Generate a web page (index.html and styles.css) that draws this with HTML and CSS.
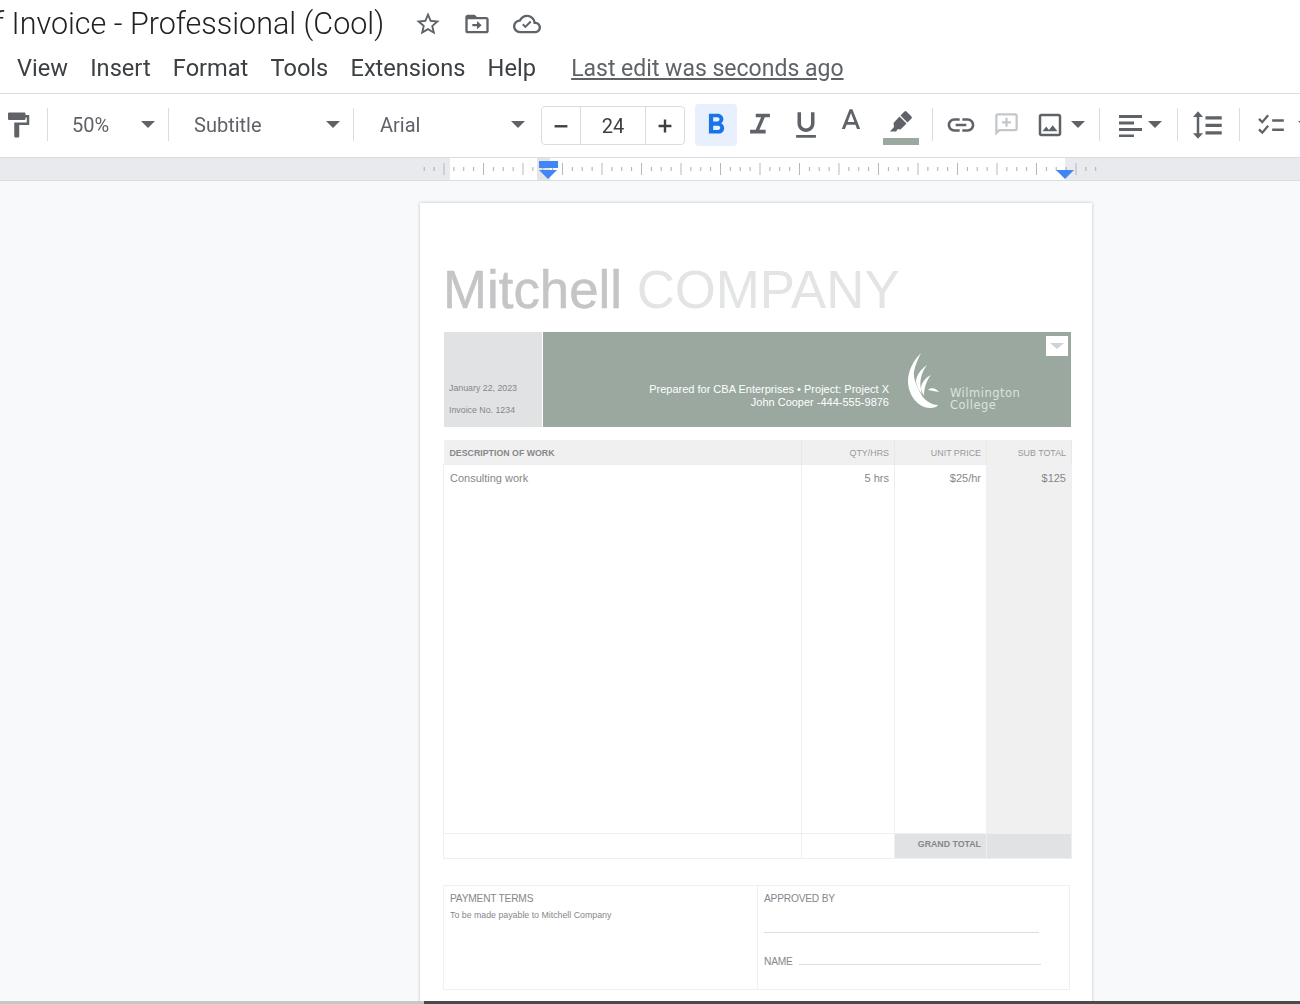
FILE: index.html
```html
<!DOCTYPE html>
<html lang="en">
<head>
  <meta charset="UTF-8" />
  <title>Invoice - Professional (Cool)</title>
  <link rel="stylesheet" href="styles.css">
</head>
<body>
  <header class="title-row">
    <h1 class="doc-title">f Invoice - Professional (Cool)</h1>
    <svg class="title-icon star" viewBox="0 0 24 24"><path d="M22 9.24l-7.19-.62L12 2 9.19 8.63 2 9.24l5.46 4.73L5.82 21 12 17.27 18.18 21l-1.63-7.03L22 9.24zM12 15.4l-3.76 2.27 1-4.28-3.32-2.88 4.38-.38L12 6.1l1.71 4.04 4.38.38-3.32 2.88 1 4.28L12 15.4z"/></svg>
    <svg class="title-icon move" viewBox="0 0 24 24"><path d="M20 6h-8l-2-2H4c-1.1 0-2 .9-2 2v12c0 1.1.9 2 2 2h16c1.1 0 2-.9 2-2V8c0-1.1-.9-2-2-2zm0 12H4V8h16v10zm-8-1.5l4-3.5-4-3.5V12H8v2h4v2.5z"/></svg>
    <svg class="title-icon cloud" viewBox="0 0 24 24"><path d="M19.35 10.04C18.67 6.59 15.64 4 12 4 9.11 4 6.6 5.64 5.35 8.04 2.34 8.36 0 10.91 0 14c0 3.31 2.69 6 6 6h13c2.76 0 5-2.24 5-5 0-2.64-2.05-4.78-4.65-4.96zM19 18H6c-2.21 0-4-1.79-4-4 0-2.05 1.53-3.76 3.56-3.97l1.07-.11.5-.95C8.08 7.14 9.94 6 12 6c2.62 0 4.88 1.86 5.39 4.43l.3 1.5 1.53.11c1.56.1 2.78 1.41 2.78 2.96 0 1.65-1.35 3-3 3z"/><path d="M10.6 15.6l-2.8-2.8 1.2-1.2 1.6 1.6 4-4 1.2 1.2z"/></svg>
  </header>

  <nav class="menu-row">
    <span>View</span>
    <span>Insert</span>
    <span>Format</span>
    <span>Tools</span>
    <span>Extensions</span>
    <span>Help</span>
    <a class="last-edit">Last edit was seconds ago</a>
  </nav>

  <div class="toolbar">
    <div class="tool paint"><svg viewBox="0 0 24 24"><path d="M18 4V3c0-.55-.45-1-1-1H5c-.55 0-1 .45-1 1v4c0 .55.45 1 1 1h12c.55 0 1-.45 1-1V6h1v4H9v11c0 .55.45 1 1 1h2c.55 0 1-.45 1-1v-9h8V4h-3z"/></svg></div>
    <div class="sep sep-paint"></div>
    <div class="select select-zoom"><span>50%</span><i class="caret"></i></div>
    <div class="sep"></div>
    <div class="select select-style"><span>Subtitle</span><i class="caret"></i></div>
    <div class="sep"></div>
    <div class="select select-font"><span>Arial</span><i class="caret"></i></div>
    <div class="stepper">
      <div class="step"><svg viewBox="0 0 24 24"><path d="M5 11h14v2.6H5z"/></svg></div>
      <div class="step-value">24</div>
      <div class="step"><svg viewBox="0 0 24 24"><path d="M19 13.3h-5.7V19h-2.6v-5.7H5v-2.6h5.7V5h2.6v5.7H19z"/></svg></div>
    </div>
    <div class="fmt fmt-bold"><svg viewBox="0 0 24 24"><path d="M15.6 10.79c.97-.67 1.65-1.77 1.65-2.79 0-2.26-1.75-4-4-4H7v14h7.04c2.09 0 3.71-1.7 3.71-3.79 0-1.52-.86-2.82-2.15-3.42zM10 6.5h3c.83 0 1.5.67 1.5 1.5s-.67 1.5-1.5 1.5h-3v-3zm3.500 9H10v-3h3.500c.83 0 1.500.67 1.500 1.500s-.67 1.500-1.500 1.500z"/></svg></div>
    <div class="fmt fmt-italic"><svg viewBox="0 0 24 24"><path d="M9 4h10v2.600h-3.600l-3.800 8.800H16V18H5v-2.600h4l3.800-8.800H9z"/></svg></div>
    <div class="fmt fmt-under"><svg viewBox="0 0 24 24"><path d="M12 17c3.310 0 6-2.690 6-6V3h-2.500v8c0 1.930-1.570 3.500-3.500 3.500S8.500 12.930 8.500 11V3H6v8c0 3.310 2.690 6 6 6zm-7 2v2h14v-2H5z"/></svg></div>
    <div class="fmt fmt-color"><svg viewBox="0 0 24 24"><path d="M11 3L5.500 17h2.250l1.120-3h6.250l1.120 3h2.250L13 3h-2zm-1.380 9L12 5.670 14.380 12H9.620z"/></svg></div>
    <div class="highlight">
      <svg viewBox="0 0 24 24"><path d="M15.500 1.500a1.500 1.500 0 0 1 2 0l5 5a1.500 1.500 0 0 1 0 2l-4 4-7-7zM10.500 6.500l7 7-6 6-2.500-.5-2 2.500H1l4-4.500-.5-4z"/></svg>
      <div class="highlight-bar"></div>
    </div>
    <div class="sep sep-link"></div>
    <div class="tool link"><svg viewBox="0 0 24 24"><path d="M3.900 12c0-1.710 1.390-3.100 3.100-3.100h4V7H7c-2.760 0-5 2.240-5 5s2.240 5 5 5h4v-1.900H7c-1.710 0-3.100-1.390-3.100-3.100zM8 13h8v-2H8v2zm9-6h-4v1.900h4c1.710 0 3.100 1.390 3.100 3.100s-1.390 3.100-3.100 3.100h-4V17h4c2.760 0 5-2.240 5-5s-2.240-5-5-5z"/></svg></div>
    <div class="tool comment"><svg viewBox="0 0 24 24"><path d="M20 2H4c-1.100 0-2 .9-2 2v18l4-4h14c1.100 0 2-.9 2-2V4c0-1.100-.9-2-2-2zm0 14H5.200L4 17.200V4h16v12zM11 14h2v-3h3V9h-3V6h-2v3H8v2h3z"/></svg></div>
    <div class="tool image"><svg viewBox="0 0 24 24"><path d="M19 3H5c-1.100 0-2 .9-2 2v14c0 1.100.9 2 2 2h14c1.100 0 2-.9 2-2V5c0-1.100-.9-2-2-2zm0 16H5V5h14v14zm-4.860-6.860l-3 3.870L9 13.140 6 17h12l-3.860-4.860z"/></svg></div>
    <i class="caret caret-image"></i>
    <div class="sep sep-align"></div>
    <div class="tool align"><svg viewBox="0 0 24 24"><path d="M1 2h24v3H1zM1 8.500h15v3H1zM1 15h24v3H1zM1 21.500h15v2.500H1z"/></svg></div>
    <i class="caret caret-align"></i>
    <div class="sep sep-spacing"></div>
    <div class="tool spacing"><svg viewBox="0 0 24 24"><path d="M10 5h13v2.600H10zM10 11h13v2.600H10zM10 17h13v2.600H10zM5 5.500H8L4 1 0 5.500h3v13H0L4 23l4-4.500H5z"/></svg></div>
    <div class="sep sep-check"></div>
    <div class="tool checklist"><svg viewBox="0 0 24 24"><path d="M13 7h10v2.200H13zM13 15h10v2.200H13zM8.800 3l1.500 1.300L4.600 11 1 7.500l1.400-1.400 2.100 2.100zM8.800 12l1.500 1.300L4.600 20 1 16.500l1.400-1.400 2.100 2.100z"/></svg></div>
    <i class="caret caret-more"></i>
  </div>

  <div class="ruler">
    <div class="ruler-paper"></div>
    <div class="ruler-shade"></div>
    <svg class="ruler-ticks" width="680" height="22">
      <defs>
        <pattern id="ticks" x="61" y="0" width="39.5" height="22" patternUnits="userSpaceOnUse">
          <rect x="0" y="5" width="1" height="12" fill="#b4b7bb"/>
          <rect x="9.900" y="9" width="1" height="4" fill="#a8abaf"/>
          <rect x="19.700" y="9" width="1" height="4" fill="#a8abaf"/>
          <rect x="29.600" y="9" width="1" height="4" fill="#a8abaf"/>
        </pattern>
      </defs>
      <rect width="680" height="22" fill="url(#ticks)"/>
    </svg>
    <div class="indent-bar"></div>
    <div class="indent-left"></div>
    <div class="indent-right"></div>
  </div>

  <main class="canvas">
    <section class="page">
      <div class="company"><span class="company-name">Mitchell</span> <span class="company-rest">COMPANY</span></div>

      <div class="banner">
        <div class="banner-meta">
          <p>January 22, 2023</p>
          <p>Invoice No. 1234</p>
        </div>
        <div class="banner-main">
          <div class="prepared">
            <p>Prepared for CBA Enterprises • Project: Project X</p>
            <p>John Cooper -444-555-9876</p>
          </div>
          <svg class="logo" viewBox="0 0 34 60">
            <path d="M14 1C7 8 1 18 1 29c0 15 11 27 22 27 4 0 7-1 8-3-7 0-14-5-17-11C10 35 6 26 7 20 8 13 11 7 14 1Z"/>
            <path d="M20 13C13 18 9 24 9 30c1 5 3 9 6 12-2-8-2-12-1-16 1-5 3-9 6-13Z"/>
            <path d="M24 23C18 26 14 31 14 37c1 3 2 5 3 7 0-7 2-15 7-21Z"/>
            <path d="M21 38c3-3 8-2 11 2-4-1-7-1-11-2Z"/>
          </svg>
          <div class="college">Wilmington<br>College</div>
          <div class="banner-menu"><i></i></div>
        </div>
      </div>

      <table class="items">
        <colgroup>
          <col class="col-desc"><col class="col-qty"><col class="col-price"><col class="col-sub">
        </colgroup>
        <thead>
          <tr>
            <th class="left desc-head">DESCRIPTION OF WORK</th>
            <th>QTY/HRS</th>
            <th>UNIT PRICE</th>
            <th>SUB TOTAL</th>
          </tr>
        </thead>
        <tbody>
          <tr class="item-row">
            <td class="left">Consulting work</td>
            <td>5 hrs</td>
            <td>$25/hr</td>
            <td class="sub-cell">$125</td>
          </tr>
          <tr class="total-row">
            <td></td>
            <td></td>
            <td class="grand">GRAND TOTAL</td>
            <td class="grand"></td>
          </tr>
        </tbody>
      </table>

      <div class="terms">
        <div class="terms-left">
          <h3>PAYMENT TERMS</h3>
          <p>To be made payable to Mitchell Company</p>
        </div>
        <div class="terms-right">
          <h3>APPROVED BY</h3>
          <div class="sign-line"></div>
          <div class="name-row"><h3>NAME</h3><div class="name-line"></div></div>
        </div>
      </div>
    </section>
  </main>

  <div class="bottom-edge"></div>
</body>
</html>
```

FILE: styles.css
```css
html,
body {
  margin: 0;
  height: 1004px;
  overflow: hidden;
}

body {
  display: flex;
  flex-direction: column;
  background-color: #fff;
  font-family: Roboto, "Liberation Sans", sans-serif;
  color: #3c4043;
  filter: blur(0.4px);
}

p,
h1,
h3 {
  margin: 0;
  font-weight: 400;
}

/* top rows */
.title-row {
  display: flex;
  align-items: center;
  height: 47px;
  white-space: nowrap;
}

.doc-title {
  margin-left: -6px;
  font-size: 30.5px;
  font-weight: 300;
  color: #202124;
}

.title-icon {
  width: 28px;
  height: 28px;
  fill: #5f6368;
}

.star {
  margin-left: 30px;
}

.move {
  margin-left: 21px;
}

.cloud {
  margin-left: 22px;
}

.menu-row {
  display: flex;
  align-items: center;
  gap: 22.2px;
  height: 47px;
  padding: 0 0 4px 17px;
  box-sizing: border-box;
  border-bottom: 1px solid #dadce0;
  font-size: 23.6px;
}

.last-edit {
  margin-left: 13px;
  font-size: 23px;
  color: #5f6368;
  text-decoration: underline;
}

/* toolbar */
.toolbar {
  display: flex;
  align-items: center;
  height: 63px;
  padding-bottom: 2px;
  box-sizing: border-box;
  font-size: 20px;
  color: #5f6368;
  white-space: nowrap;
}

.tool {
  display: flex;
  align-items: center;
  justify-content: center;
  flex: none;
}

.tool svg {
  width: 24px;
  height: 24px;
  fill: #5f6368;
}

.paint {
  width: 36px;
}

.paint svg {
  width: 30px;
  height: 30px;
}

.sep {
  flex: none;
  width: 1px;
  height: 33px;
  background-color: #dadce0;
}

.sep-paint {
  margin-left: 11px;
}

.select {
  display: flex;
  align-items: center;
  justify-content: space-between;
  flex: none;
  box-sizing: border-box;
}

.select-zoom {
  width: 120px;
  padding: 0 13px 0 24px;
}

.select-style {
  width: 184px;
  padding: 0 13px 0 25px;
}

.select-font {
  width: 187px;
  padding: 0 16px 0 26px;
}

.caret {
  display: block;
  flex: none;
  width: 0;
  height: 0;
  border-left: 7px solid transparent;
  border-right: 7px solid transparent;
  border-top: 7px solid #5f6368;
}

.stepper {
  display: flex;
  flex: none;
  width: 144px;
  height: 39px;
  margin-top: 2px;
  box-sizing: border-box;
  border: 1px solid #dadce0;
  border-radius: 4px;
}

.step {
  display: flex;
  align-items: center;
  justify-content: center;
  width: 38px;
}

.step svg {
  width: 22px;
  height: 22px;
  fill: #3c4043;
}

.step-value {
  width: 64px;
  border-left: 1px solid #dadce0;
  border-right: 1px solid #dadce0;
  text-align: center;
  line-height: 39px;
  color: #3c4043;
}

.fmt {
  display: flex;
  align-items: center;
  justify-content: center;
  flex: none;
  height: 42px;
}

.fmt svg {
  width: 34px;
  height: 34px;
  fill: #5f6368;
}

.fmt-bold {
  width: 42px;
  margin-left: 10px;
  border-radius: 4px;
  background-color: #e8f0fe;
}

.fmt-bold svg {
  fill: #1a73e8;
}

.fmt-italic {
  width: 46px;
}

.fmt-under {
  width: 45px;
}

.fmt-color {
  width: 46px;
  margin-top: -6px;
}

.highlight {
  flex: none;
  width: 36px;
  margin: 6px 0 0 9px;
}

.highlight svg {
  display: block;
  width: 24px;
  height: 24px;
  margin: 0 auto 4px;
  fill: #5f6368;
}

.highlight-bar {
  height: 7px;
  background-color: #9aa89f;
}

.sep-link {
  margin-left: 13px;
}

.link {
  width: 56px;
}

.link svg {
  width: 32px;
  height: 32px;
}

.comment {
  width: 34px;
}

.comment svg {
  width: 27px;
  height: 27px;
  fill: #c4c7c9;
}

.image {
  width: 48px;
  margin-left: 3px;
}

.image svg {
  width: 30px;
  height: 30px;
}

.caret-image {
  margin-left: -3px;
}

.sep-align {
  margin-left: 14px;
}

.align {
  width: 24px;
  margin-left: 18px;
}

.caret-align {
  margin-left: 6px;
}

.sep-spacing {
  margin-left: 15px;
}

.spacing {
  width: 30px;
  margin-left: 15px;
}

.spacing svg {
  width: 30px;
  height: 30px;
}

.sep-check {
  margin-left: 16px;
}

.checklist {
  width: 28px;
  margin-left: 17px;
}

.checklist svg {
  width: 28px;
  height: 28px;
}

.caret-more {
  margin-left: 13px;
}

/* ruler */
.ruler {
  position: relative;
  flex: none;
  height: 22px;
  border-top: 1px solid #dadce0;
  border-bottom: 1px solid #dadce0;
  background-color: #e8eaed;
}

.ruler-paper {
  width: 615px;
  height: 22px;
  margin-left: 450px;
  background-color: #fff;
}

.ruler-shade {
  position: absolute;
  top: 0;
  left: 537px;
  width: 13px;
  height: 22px;
  background-color: #e3e4e6;
}

.ruler-ticks {
  position: absolute;
  top: 0;
  left: 422px;
}

.indent-bar {
  position: absolute;
  top: 3px;
  left: 539px;
  width: 19px;
  height: 7px;
  background-color: #4285f4;
}

.indent-left,
.indent-right {
  position: absolute;
  top: 12px;
  width: 0;
  height: 0;
  border-left: 9px solid transparent;
  border-right: 9px solid transparent;
  border-top: 9px solid #4285f4;
}

.indent-left {
  left: 539px;
}

.indent-right {
  left: 1056px;
}

/* document */
.canvas {
  flex: 1;
  min-height: 0;
  padding: 22px 0 0 420px;
  background-color: #f8f9fa;
}

.page {
  box-sizing: border-box;
  width: 672px;
  height: 800px;
  padding: 0 21px 0 24px;
  background-color: #fff;
  box-shadow: 0 0 3px rgba(60, 64, 67, 0.3);
  font-family: "Liberation Sans", Arial, sans-serif;
  color: #85878a;
}

.company {
  margin-left: -1px;
  padding-top: 57px;
  height: 72px;
  font-size: 52.8px;
  line-height: 59px;
  white-space: nowrap;
}

.company-name {
  color: #c4c5c7;
  -webkit-text-stroke: 0.5px #c4c5c7;
}

.company-rest {
  color: #e3e4e6;
}

.banner {
  display: flex;
  height: 95px;
}

.banner-meta {
  display: flex;
  flex-direction: column;
  justify-content: flex-end;
  gap: 12px;
  box-sizing: border-box;
  width: 98px;
  padding: 0 0 12px 5px;
  background-color: #e1e2e4;
  font-size: 8.8px;
  color: #85878a;
}

.banner-main {
  position: relative;
  display: flex;
  align-items: flex-end;
  flex: 1;
  margin-left: 1px;
  background-color: #9aa89f;
}

.prepared {
  width: 346px;
  padding-bottom: 18px;
  text-align: right;
  font-size: 11px;
  line-height: 13px;
  color: #fff;
}

.logo {
  width: 34px;
  height: 60px;
  margin: 0 0 15px 18px;
  fill: #fff;
}

.college {
  margin: 0 0 16px 9px;
  font-family: "DejaVu Sans", sans-serif;
  font-size: 11.5px;
  line-height: 12px;
  letter-spacing: 0.5px;
  color: #dde2de;
}

.banner-menu {
  position: absolute;
  top: 4px;
  right: 3px;
  display: flex;
  align-items: center;
  justify-content: center;
  width: 22px;
  height: 20px;
  background-color: #fff;
}

.banner-menu i {
  display: block;
  width: 0;
  height: 0;
  border-left: 7px solid transparent;
  border-right: 7px solid transparent;
  border-top: 6px solid #d0d2d3;
}

.items {
  width: 628px;
  margin: 13px 0 0 -1px;
  border-collapse: collapse;
  table-layout: fixed;
  font-size: 11px;
}

.col-desc {
  width: 358px;
}

.col-qty {
  width: 93px;
}

.col-price {
  width: 92px;
}

.col-sub {
  width: 85px;
}

.items th {
  height: 24px;
  padding: 2px 5px 0 6px;
  box-sizing: border-box;
  background-color: #f0f0f1;
  text-align: right;
  font-size: 8.9px;
  font-weight: 400;
  color: #97999b;
  border-right: 1px solid #e8e8e9;
}

.items th.desc-head {
  font-weight: 700;
  font-size: 8.8px;
  color: #85878a;
}

.items .left {
  text-align: left;
}

.items td {
  padding: 7px 5px 0 6px;
  text-align: right;
  vertical-align: top;
  border: 1px solid #eeeff0;
}

.item-row td {
  height: 361px;
}

.items .sub-cell {
  background-color: #f0f0f1;
}

.total-row td {
  height: 25px;
  padding: 0 5px 3px 6px;
  box-sizing: border-box;
  vertical-align: middle;
}

.items .grand {
  background-color: #e1e2e4;
  font-size: 8.8px;
  font-weight: 700;
}

.terms {
  display: flex;
  width: 627px;
  height: 105px;
  margin: 26px 0 0 -1px;
  box-sizing: border-box;
  border: 1px solid #f0f0f1;
  font-size: 8.8px;
}

.terms h3 {
  font-size: 10.2px;
  letter-spacing: -0.2px;
}

.terms-left {
  width: 313px;
  padding: 7px 6px;
  box-sizing: border-box;
}

.terms-left p {
  margin-top: 6px;
}

.terms-right {
  flex: 1;
  padding: 7px 6px 0;
  border-left: 1px solid #f0f0f1;
}

.sign-line {
  width: 275px;
  height: 1px;
  margin-top: 28px;
  background-color: #dcdddf;
}

.name-row {
  display: flex;
  align-items: flex-end;
  gap: 6px;
  margin-top: 23px;
}

.name-line {
  width: 242px;
  height: 1px;
  margin-bottom: 2px;
  background-color: #dcdddf;
}

.bottom-edge {
  position: absolute;
  top: 1001px;
  left: 0;
  right: 0;
  height: 3px;
  background: linear-gradient(to right, #c5c8c6 424px, #4a4a4a 424px);
}
```
